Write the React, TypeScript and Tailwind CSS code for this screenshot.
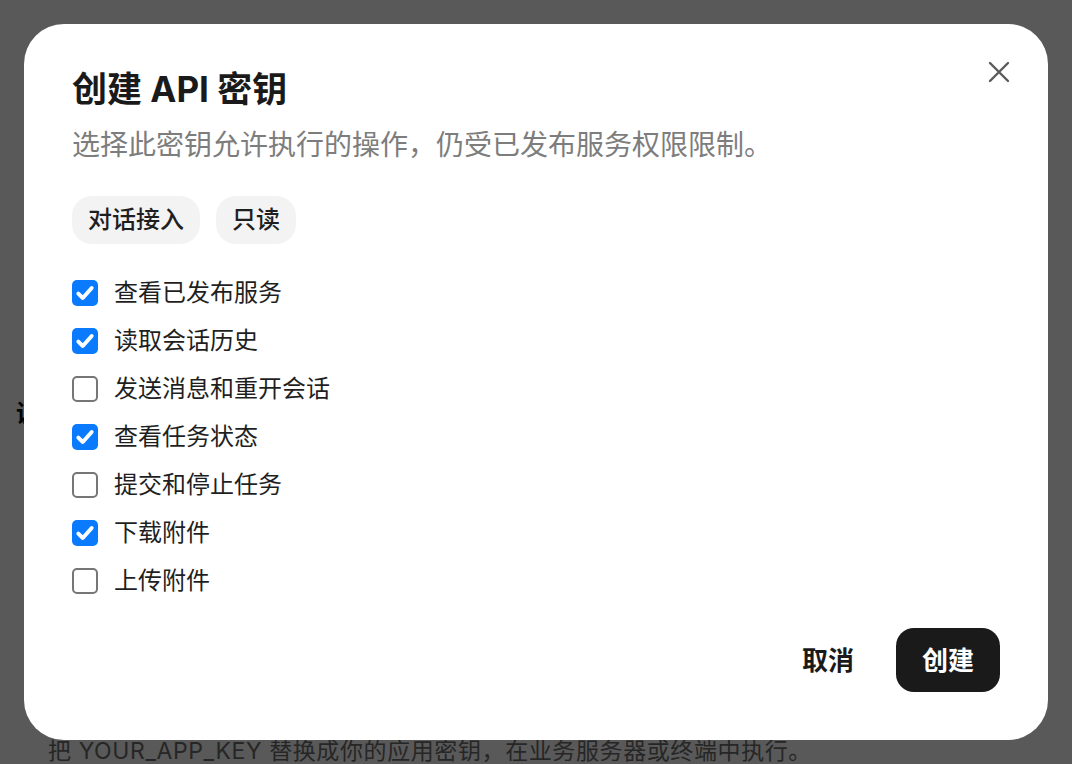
import { useState } from 'react';

const FONT = '"Inter", "Noto Sans CJK SC", sans-serif';

const PERMISSIONS = [
  { id: 'services.read', label: '查看已发布服务', on: true },
  { id: 'history.read', label: '读取会话历史', on: true },
  { id: 'chat.write', label: '发送消息和重开会话', on: false },
  { id: 'jobs.read', label: '查看任务状态', on: true },
  { id: 'jobs.write', label: '提交和停止任务', on: false },
  { id: 'files.read', label: '下载附件', on: true },
  { id: 'files.write', label: '上传附件', on: false },
];

function Checkbox({ checked, onChange }: { checked: boolean; onChange: () => void }) {
  return (
    <button
      type="button"
      role="checkbox"
      aria-checked={checked}
      onClick={onChange}
      className={
        checked
          ? 'flex h-[26px] w-[26px] shrink-0 items-center justify-center rounded-[5px] bg-[#0a7bff]'
          : 'flex h-[26px] w-[26px] shrink-0 items-center justify-center rounded-[5px] border-2 border-[#767676] bg-white'
      }
    >
      {checked && (
        <svg width="26" height="26" viewBox="0 0 26 26" fill="none">
          <path d="M6.3 13.6 10.8 18 19.7 8" stroke="#fff" strokeWidth="3.9" strokeLinecap="round" strokeLinejoin="round" />
        </svg>
      )}
    </button>
  );
}

export default function App() {
  const [checked, setChecked] = useState<Record<string, boolean>>(
    Object.fromEntries(PERMISSIONS.map((p) => [p.id, p.on]))
  );

  const toggle = (id: string) => setChecked((prev) => ({ ...prev, [id]: !prev[id] }));

  return (
    <div className="relative min-h-[764px] overflow-hidden bg-white" style={{ fontFamily: FONT }}>
      {/* page underneath the dialog */}
      <div className="px-4 pt-[398px]">
        <h2 className="text-[24px] font-bold leading-8 text-[#111]">调用示例</h2>
      </div>
      <p className="mt-[306px] pl-12 text-[23px] leading-[30px] tracking-[0.6px] text-[#6e6e6e]">
        把 YOUR_APP_KEY 替换成你的应用密钥，在业务服务器或终端中执行。
      </p>

      <div className="fixed inset-0 flex items-center justify-center bg-black/65">
        <div className="relative flex h-[716px] w-[1024px] flex-col rounded-[40px] bg-white px-12 pb-12 pt-[43px]">
          <button type="button" aria-label="关闭" className="absolute right-[38px] top-[37px] text-[#5a5a5a]">
            <svg width="22" height="22" viewBox="0 0 22 22" fill="none">
              <path d="M2 2 20 20M20 2 2 20" stroke="currentColor" strokeWidth="2.4" strokeLinecap="round" />
            </svg>
          </button>

          <h1 className="text-[35px] font-bold leading-[44px] text-[#1a1a1a]">创建 API 密钥</h1>
          <p className="mt-[14px] text-[28px] leading-[40px] text-[#7d7d7d]">
            选择此密钥允许执行的操作，仍受已发布服务权限限制。
          </p>

          <div className="mt-[31px] flex gap-4">
            <button type="button" className="h-12 rounded-[20px] bg-[#f3f3f3] px-4 text-[24px] font-medium text-[#1f1f1f]">
              对话接入
            </button>
            <button type="button" className="h-12 rounded-[20px] bg-[#f3f3f3] px-4 text-[24px] font-medium text-[#1f1f1f]">
              只读
            </button>
          </div>

          <div className="mt-[25px] flex flex-col">
            {PERMISSIONS.map((p) => (
              <label key={p.id} className="flex h-12 cursor-pointer items-center gap-4">
                <Checkbox checked={checked[p.id]} onChange={() => toggle(p.id)} />
                <span className="text-[24px] leading-8 text-[#1f1f1f]">{p.label}</span>
              </label>
            ))}
          </div>

          <div className="mt-[23px] flex justify-end gap-4">
            <button type="button" className="h-16 rounded-[18px] px-[26px] text-[26px] font-bold text-[#1a1a1a]">
              取消
            </button>
            <button type="button" className="h-16 rounded-[18px] bg-[#1a1a1a] px-[26px] text-[26px] font-bold text-white">
              创建
            </button>
          </div>
        </div>
      </div>
    </div>
  );
}
